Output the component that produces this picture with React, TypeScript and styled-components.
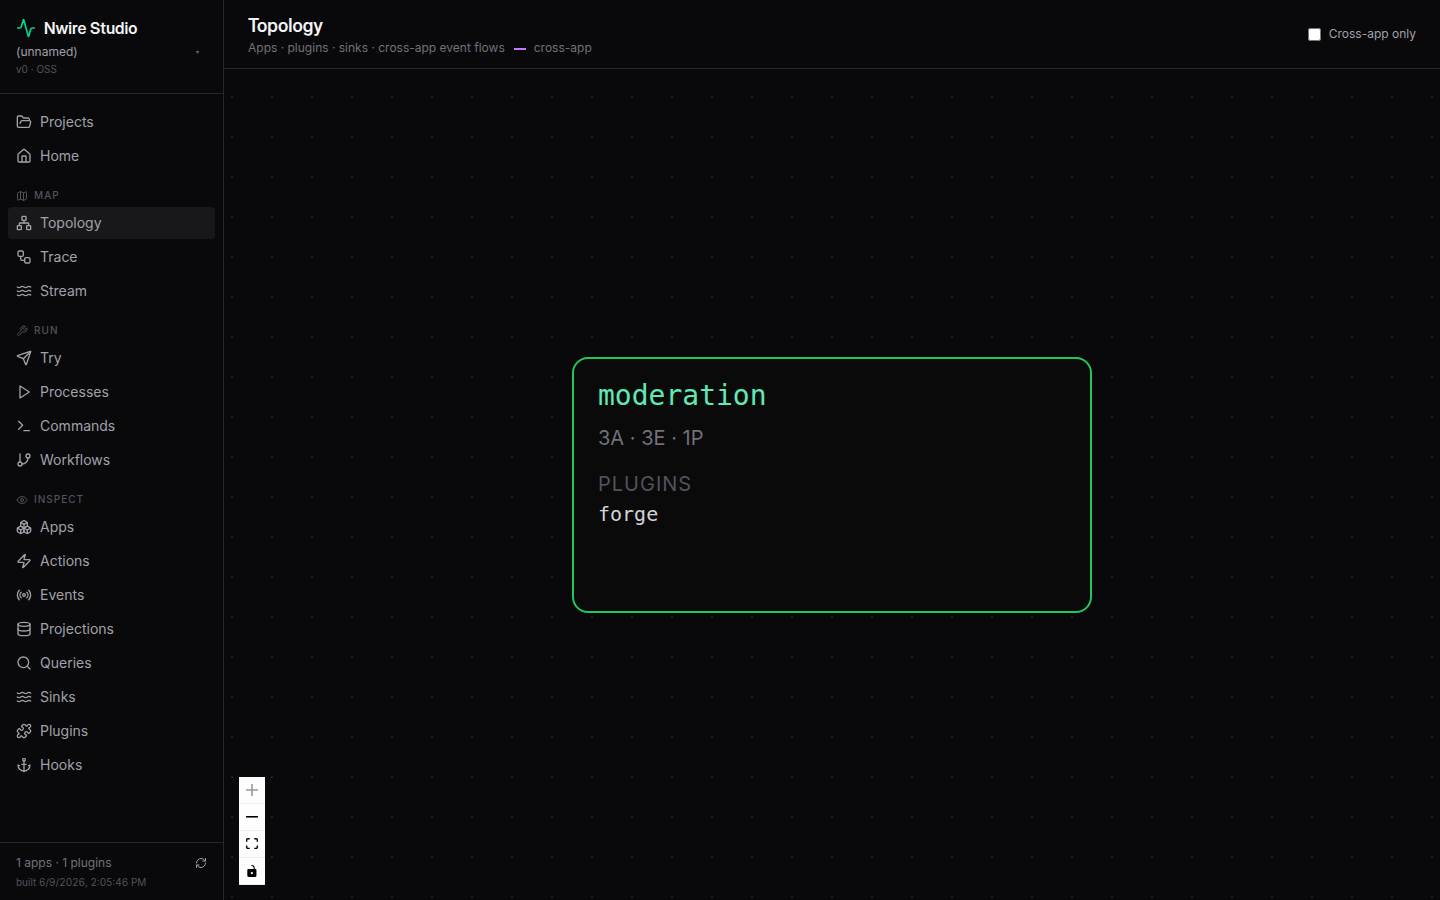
import React, { useId, useState, type ComponentType } from "react";
import styled, { createGlobalStyle } from "styled-components";
import {
  Activity,
  Anchor,
  Boxes,
  Database,
  Eye,
  FolderOpen,
  House,
  Map as MapIcon,
  Network,
  Puzzle,
  Radio,
  RefreshCw,
  Search,
  Send,
  Terminal,
  Waves,
  Workflow,
  Zap,
} from "lucide-react";

const color = {
  bg: "#09090b",
  line: "#27272a",
  text: "#f4f4f5",
  nav: "#a1a1aa",
  muted: "#71717b",
  faint: "#52525c",
};

const displayFont = `"Inter Display", Inter, "Liberation Sans", sans-serif`;
const monoFont = `"DejaVu Sans Mono", monospace`;

const GlobalStyle = createGlobalStyle`
  *, *::before, *::after { box-sizing: border-box; }
  body {
    margin: 0;
    background: ${color.bg};
    color: ${color.text};
    font-family: Inter, "Liberation Sans", sans-serif;
    font-size: 14px;
    line-height: 20px;
  }
  button { font: inherit; color: inherit; background: none; border: 0; padding: 0; cursor: pointer; }
  h1, p { margin: 0; }
`;

const Shell = styled.div`
  display: grid;
  grid-template-columns: 224px minmax(0, 1fr);
  min-height: 100vh;
`;

const Sidebar = styled.aside`
  display: flex;
  flex-direction: column;
  border-right: 1px solid ${color.line};
`;

const Brand = styled.div`
  padding: 16px 16px 19px;
  border-bottom: 1px solid ${color.line};
`;

const BrandTitle = styled.div`
  display: flex;
  align-items: center;
  gap: 8px;
  font-family: ${displayFont};
  font-size: 16px;
  font-weight: 600;
  line-height: 24px;

  svg { color: #00d492; }
`;

const ProjectPicker = styled.button`
  display: flex;
  align-items: center;
  justify-content: space-between;
  width: 100%;
  padding-right: 8px;
  font-size: 12px;
  line-height: 24px;
  color: ${color.nav};
`;

const Caret = styled.span`
  font-size: 6px;
  color: ${color.muted};
`;

const Version = styled.p`
  font-size: 10px;
  line-height: 10px;
  color: ${color.faint};
`;

const Nav = styled.nav`
  display: flex;
  flex: 1;
  flex-direction: column;
  gap: 12px;
  padding: 12px 8px;
`;

const NavGroup = styled.div`
  display: flex;
  flex-direction: column;
  gap: 2px;
`;

const GroupLabel = styled.div`
  display: flex;
  align-items: center;
  gap: 6px;
  padding: 4px 8px 2px;
  font-size: 10px;
  font-weight: 500;
  line-height: 15px;
  letter-spacing: 1px;
  color: ${color.faint};
`;

const NavLink = styled.a<{ $active?: boolean }>`
  display: flex;
  align-items: center;
  gap: 8px;
  padding: 6px 8px;
  border-radius: 4px;
  color: ${color.nav};
  background: ${(p) => (p.$active ? "#18181b" : "transparent")};
  text-decoration: none;
`;

const Footer = styled.footer`
  padding: 12px 16px 10px;
  border-top: 1px solid ${color.line};
`;

const FooterRow = styled.div`
  display: flex;
  align-items: center;
  justify-content: space-between;
  font-size: 12px;
  line-height: 16px;
  color: ${color.muted};
`;

const IconButton = styled.button`
  display: flex;
  color: ${color.nav};
`;

const Built = styled.p`
  margin-top: 4px;
  font-size: 10px;
  line-height: 15px;
  font-variant-numeric: tabular-nums;
  color: ${color.faint};
`;

const Main = styled.main`
  display: flex;
  flex-direction: column;
`;

const Header = styled.header`
  display: flex;
  align-items: center;
  justify-content: space-between;
  padding: 12px 24px;
  border-bottom: 1px solid ${color.line};
`;

const Title = styled.h1`
  font-family: ${displayFont};
  font-size: 18px;
  font-weight: 600;
  line-height: 28px;
`;

const Subtitle = styled.p`
  display: flex;
  align-items: center;
  font-size: 12px;
  line-height: 16px;
  color: ${color.muted};
`;

const Swatch = styled.span`
  width: 12px;
  height: 2px;
  margin: 2px 8px 0 9px;
  background: #c27aff;
`;

const Toggle = styled.label`
  display: flex;
  align-items: center;
  gap: 8px;
  font-size: 12px;
  line-height: 16px;
  color: ${color.nav};

  input { width: 13px; height: 13px; margin: 0; }
`;

const Canvas = styled.section`
  position: relative;
  display: flex;
  flex: 1;
  align-items: center;
  justify-content: center;
  overflow: hidden;
`;

const Dots = styled.svg`
  position: absolute;
  inset: 0;
  width: 100%;
  height: 100%;
`;

const AppNode = styled.article`
  position: relative;
  width: 520px;
  min-height: 256px;
  padding: 21px 24px;
  border: 2px solid #22c55e;
  border-radius: 16px;
  background: #0a0a0a;
`;

const NodeName = styled.div`
  font-family: ${monoFont};
  font-size: 28px;
  line-height: 32px;
  color: #5ee9b5;
`;

const NodeStats = styled.div`
  margin-top: 12px;
  font-size: 20px;
  line-height: 28px;
  color: ${color.muted};
`;

const NodeHeading = styled.div`
  margin-top: 16px;
  font-size: 20px;
  line-height: 32px;
  letter-spacing: 1px;
  color: ${color.faint};
`;

const NodePlugin = styled.div`
  font-family: ${monoFont};
  font-size: 20px;
  line-height: 28px;
  color: #d4d4d8;
`;

const Controls = styled.div`
  position: absolute;
  left: 15px;
  bottom: 15px;
  display: flex;
  flex-direction: column;
`;

const ControlButton = styled.button`
  display: flex;
  align-items: center;
  justify-content: center;
  width: 26px;
  height: 27px;
  border-bottom: 1px solid #eeeeee;
  background: #fefefe;

  &:disabled { cursor: default; }
  &:disabled svg { fill-opacity: 0.4; }
  svg { width: 12px; max-height: 12px; fill: #000000; }
`;

type IconProps = { size?: number | string };

const Stroke = styled.svg`
  fill: none;
  stroke: currentColor;
  stroke-width: 2;
  stroke-linecap: round;
  stroke-linejoin: round;
`;

function PlayIcon({ size = 24 }: IconProps) {
  return (
    <Stroke width={size} height={size} viewBox="0 0 24 24" aria-hidden="true">
      <polygon points="6 3 20 12 6 21 6 3" />
    </Stroke>
  );
}

function BranchIcon({ size = 24 }: IconProps) {
  return (
    <Stroke width={size} height={size} viewBox="0 0 24 24" aria-hidden="true">
      <line x1="6" x2="6" y1="3" y2="15" />
      <circle cx="18" cy="6" r="3" />
      <circle cx="6" cy="18" r="3" />
      <path d="M18 9a9 9 0 0 1-9 9" />
    </Stroke>
  );
}

function WrenchIcon({ size = 24 }: IconProps) {
  return (
    <Stroke width={size} height={size} viewBox="0 0 24 24" aria-hidden="true">
      <path d="M14.7 6.3a1 1 0 0 0 0 1.4l1.6 1.6a1 1 0 0 0 1.4 0l3.77-3.77a6 6 0 0 1-7.94 7.94l-6.91 6.91a2.12 2.12 0 0 1-3-3l6.91-6.91a6 6 0 0 1 7.94-7.94l-3.76 3.76z" />
    </Stroke>
  );
}

type Icon = ComponentType<IconProps>;
type Item = { label: string; icon: Icon };
type Group = { label?: string; icon?: Icon; items: Item[] };

const groups: Group[] = [
  {
    items: [
      { label: "Projects", icon: FolderOpen },
      { label: "Home", icon: House },
    ],
  },
  {
    label: "MAP",
    icon: MapIcon,
    items: [
      { label: "Topology", icon: Network },
      { label: "Trace", icon: Workflow },
      { label: "Stream", icon: Waves },
    ],
  },
  {
    label: "RUN",
    icon: WrenchIcon,
    items: [
      { label: "Try", icon: Send },
      { label: "Processes", icon: PlayIcon },
      { label: "Commands", icon: Terminal },
      { label: "Workflows", icon: BranchIcon },
    ],
  },
  {
    label: "INSPECT",
    icon: Eye,
    items: [
      { label: "Apps", icon: Boxes },
      { label: "Actions", icon: Zap },
      { label: "Events", icon: Radio },
      { label: "Projections", icon: Database },
      { label: "Queries", icon: Search },
      { label: "Sinks", icon: Waves },
      { label: "Plugins", icon: Puzzle },
      { label: "Hooks", icon: Anchor },
    ],
  },
];

function DotGrid() {
  const id = useId();
  return (
    <Dots aria-hidden="true">
      <pattern
        id={id}
        x="8"
        y="28"
        width="40"
        height="40"
        patternUnits="userSpaceOnUse"
        patternTransform="translate(-1,-1)"
      >
        <circle cx="1" cy="1" r="1" fill={color.line} />
      </pattern>
      <rect width="100%" height="100%" fill={`url(#${id})`} />
    </Dots>
  );
}

export default function App() {
  const [active, setActive] = useState("Topology");
  const [crossOnly, setCrossOnly] = useState(false);

  return (
    <>
      <GlobalStyle />
      <Shell>
        <Sidebar>
          <Brand>
            <BrandTitle>
              <Activity size={20} />
              Nwire Studio
            </BrandTitle>
            <ProjectPicker type="button">
              (unnamed)
              <Caret>▾</Caret>
            </ProjectPicker>
            <Version>v0 · OSS</Version>
          </Brand>
          <Nav>
            {groups.map((group, i) => (
              <NavGroup key={i}>
                {group.label && group.icon && (
                  <GroupLabel>
                    <group.icon size={12} />
                    {group.label}
                  </GroupLabel>
                )}
                {group.items.map(({ label, icon: ItemIcon }) => (
                  <NavLink
                    key={label}
                    href={`#${label.toLowerCase()}`}
                    $active={label === active}
                    onClick={() => setActive(label)}
                  >
                    <ItemIcon size={16} />
                    {label}
                  </NavLink>
                ))}
              </NavGroup>
            ))}
          </Nav>
          <Footer>
            <FooterRow>
              1 apps · 1 plugins
              <IconButton type="button" aria-label="Refresh">
                <RefreshCw size={12} />
              </IconButton>
            </FooterRow>
            <Built>built 6/9/2026, 2:05:46 PM</Built>
          </Footer>
        </Sidebar>
        <Main>
          <Header>
            <div>
              <Title>Topology</Title>
              <Subtitle>
                Apps · plugins · sinks · cross-app event flows
                <Swatch />
                cross-app
              </Subtitle>
            </div>
            <Toggle>
              <input
                type="checkbox"
                checked={crossOnly}
                onChange={(e) => setCrossOnly(e.target.checked)}
              />
              Cross-app only
            </Toggle>
          </Header>
          <Canvas>
            <DotGrid />
            <AppNode>
              <NodeName>moderation</NodeName>
              <NodeStats>3A · 3E · 1P</NodeStats>
              <NodeHeading>PLUGINS</NodeHeading>
              <NodePlugin>forge</NodePlugin>
            </AppNode>
            <Controls>
              <ControlButton type="button" aria-label="Zoom in" disabled>
                <svg viewBox="0 0 32 32">
                  <path d="M32 18.133H18.133V32h-4.266V18.133H0v-4.266h13.867V0h4.266v13.867H32z" />
                </svg>
              </ControlButton>
              <ControlButton type="button" aria-label="Zoom out">
                <svg viewBox="0 0 32 5">
                  <path d="M0 0h32v4.2H0z" />
                </svg>
              </ControlButton>
              <ControlButton type="button" aria-label="Fit view">
                <svg viewBox="0 0 32 30">
                  <path d="M3.692 4.63c0-.53.4-.938.939-.938h5.215V0H4.708C2.13 0 0 2.054 0 4.63v5.216h3.692V4.631zM27.354 0h-5.2v3.692h5.17c.53 0 .984.4.984.939v5.215H32V4.631A4.624 4.624 0 0027.354 0zm.954 24.83c0 .532-.4.94-.939.94h-5.215v3.768h5.215c2.577 0 4.631-2.13 4.631-4.707v-5.139h-3.692v5.139zm-23.677.94c-.531 0-.939-.4-.939-.94v-5.138H0v5.139c0 2.577 2.13 4.707 4.708 4.707h5.138V25.77H4.631z" />
                </svg>
              </ControlButton>
              <ControlButton type="button" aria-label="Toggle interactivity">
                <svg viewBox="0 0 25 32">
                  <path d="M21.333 10.667H19.81V7.619C19.81 3.429 16.38 0 12.19 0c-4.114 1.828-1.37 2.133.305 2.438 1.676.305 4.42 2.59 4.42 5.181v3.048H3.047A3.056 3.056 0 000 13.714v15.238A3.056 3.056 0 003.048 32h18.285a3.056 3.056 0 003.048-3.048V13.714a3.056 3.056 0 00-3.048-3.047zM12.19 24.533a3.056 3.056 0 01-3.047-3.047 3.056 3.056 0 013.047-3.048 3.056 3.056 0 013.048 3.048 3.056 3.056 0 01-3.048 3.047z" />
                </svg>
              </ControlButton>
            </Controls>
          </Canvas>
        </Main>
      </Shell>
    </>
  );
}
